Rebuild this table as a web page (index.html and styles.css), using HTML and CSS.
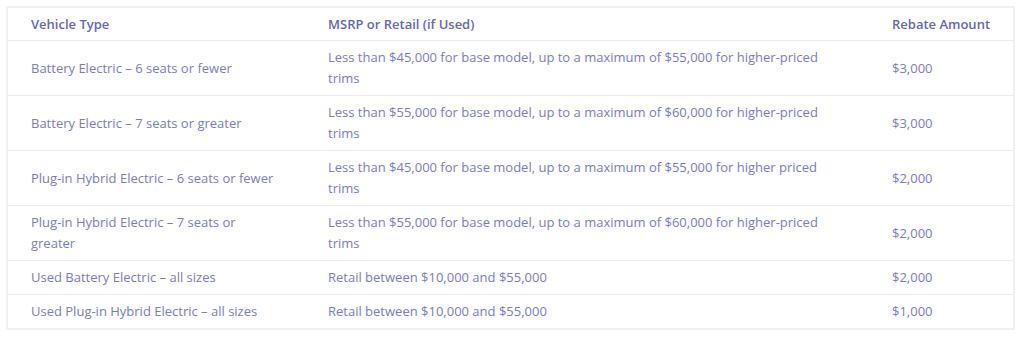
FILE: index.html
```html
<!DOCTYPE html>
<html>
<head>
<meta charset="utf-8">
<link rel="stylesheet" href="styles.css">
</head>
<body>
<table class="rebates">
  <thead>
    <tr><th class="c1">Vehicle Type</th><th class="c2">MSRP or Retail (if Used)</th><th class="c3">Rebate Amount</th></tr>
  </thead>
  <tbody>
    <tr><td>Battery Electric – 6 seats or fewer</td><td>Less than $45,000 for base model, up to a maximum of $55,000 for higher-priced trims</td><td class="amt">$3,000</td></tr>
    <tr><td>Battery Electric – 7 seats or greater</td><td>Less than $55,000 for base model, up to a maximum of $60,000 for higher-priced trims</td><td class="amt">$3,000</td></tr>
    <tr><td>Plug-in Hybrid Electric – 6 seats or fewer</td><td>Less than $45,000 for base model, up to a maximum of $55,000 for higher priced trims</td><td class="amt">$2,000</td></tr>
    <tr><td>Plug-in Hybrid Electric – 7 seats or greater</td><td>Less than $55,000 for base model, up to a maximum of $60,000 for higher-priced trims</td><td class="amt">$2,000</td></tr>
    <tr><td>Used Battery Electric – all sizes</td><td>Retail between $10,000 and $55,000</td><td class="amt">$2,000</td></tr>
    <tr><td>Used Plug-in Hybrid Electric – all sizes</td><td>Retail between $10,000 and $55,000</td><td class="amt">$1,000</td></tr>
  </tbody>
</table>
</body>
</html>
```
FILE: styles.css
```css
html, body { margin: 0; background: #fff; }
body { padding: 6px 9px 0 6px; }
.rebates {
  width: 1009px;
  border-collapse: collapse;
  border: 2px solid #f0f0f2;
  font-family: "Open Sans", "Noto Sans", sans-serif;
  font-size: 13px;
  color: #7b7bc6;
  table-layout: fixed;
}
.rebates th, .rebates td {
  text-align: left;
  vertical-align: middle;
  padding: 6px 23px 6px 23px;
  line-height: 21px;
  border-top: 1px solid #ebebef;
}
.rebates th {
  font-weight: 600;
  color: #6767b4;
  padding-top: 6px;
  padding-bottom: 6px;
  line-height: 20px;
  white-space: nowrap;
}
.rebates .c3, .rebates .amt { padding-right: 8px; }
.c1 { width: 251px; }
.c2 { width: 518px; }
.c3 { width: auto; }
```
